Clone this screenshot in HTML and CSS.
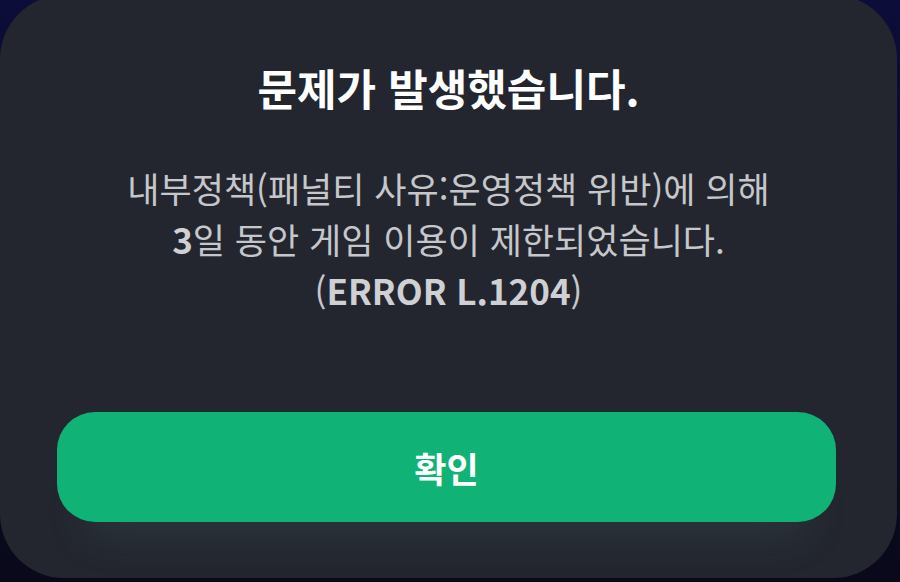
FILE: index.html
```html
<!DOCTYPE html>
<html lang="ko">
<head>
<meta charset="utf-8">
<link rel="stylesheet" href="styles.css">
</head>
<body>
<div class="dialog">
  <h1 class="title">문제가 발생했습니다.</h1>
  <p class="message">내부정책(패널티 사유:운영정책 위반)에 의해<br><b>3</b>일 동안 게임 이용이 제한되었습니다.<br>(<b>ERROR L.1204</b>)</p>
  <button class="confirm">확인</button>
</div>
</body>
</html>
```
FILE: styles.css
```css
html, body {
  margin: 0;
  padding: 0;
  width: 900px;
  height: 582px;
  overflow: hidden;
}
body {
  background: linear-gradient(180deg, #0c0d38 0%, #0b0b2a 50%, #09091a 100%);
  font-family: "Noto Sans CJK KR", "Noto Sans", sans-serif;
}
.dialog {
  box-sizing: border-box;
  width: 897px;
  height: 583px;
  margin-top: -5px;
  background: #23262f;
  border-radius: 64px;
  display: flex;
  flex-direction: column;
  align-items: center;
  padding-top: 66px;
}
.title {
  margin: 0;
  font-size: 43px;
  line-height: 52px;
  font-weight: 700;
  color: #ffffff;
  letter-spacing: 0;
}
.message {
  margin: 49px 0 0 0;
  font-size: 35px;
  line-height: 51px;
  font-weight: 400;
  color: #c6c7cb;
  text-align: center;
  letter-spacing: 0;
}
.message b {
  font-weight: 700;
  color: #cfd0d3;
}
.confirm {
  margin: 97px 0 0 0;
  align-self: flex-start;
  margin-left: 57px;
  width: 779px;
  height: 110px;
  border: none;
  border-radius: 38px;
  background: #10b275;
  color: #ffffff;
  font-family: "Noto Sans CJK KR", "Noto Sans", sans-serif;
  font-size: 35px;
  font-weight: 700;
  box-shadow: 0 44px 40px -30px rgba(90, 130, 120, 0.18);
}
```
